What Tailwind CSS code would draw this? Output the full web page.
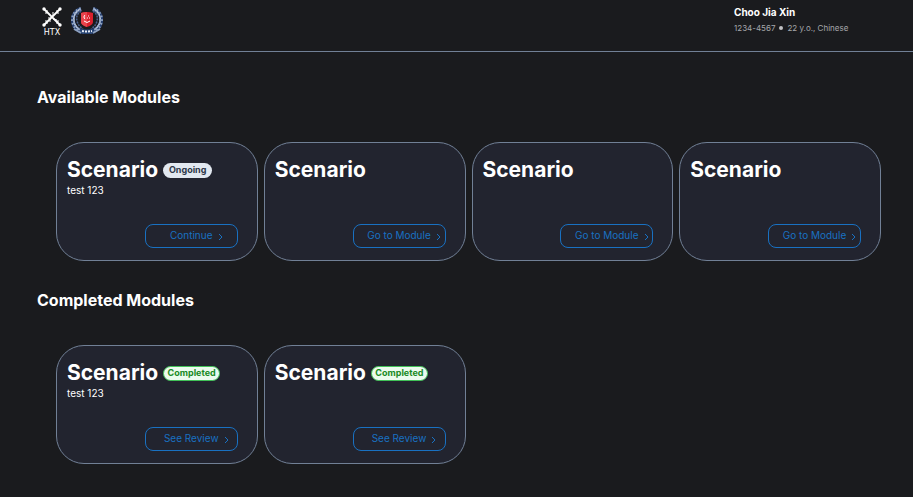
<!DOCTYPE html>
<html lang="en">
<head>
<meta charset="utf-8">
<meta name="viewport" content="width=device-width, initial-scale=1">
<title>Modules</title>
<script src="https://cdn.jsdelivr.net/npm/@tailwindcss/browser@4"></script>
</head>
<body class="min-h-screen bg-[#1a1b1e] font-['Inter',sans-serif] text-white">
<svg class="hidden" aria-hidden="true">
  <symbol id="chevron" viewBox="0 0 5 8"><path d="M1 1l3 3-3 3" fill="none" stroke="currentColor"/></symbol>
</svg>
<header class="flex h-[52px] items-start justify-between border-b border-[#718096] pr-16 pl-10">
  <div class="flex items-start gap-[7px] pt-[7px]">
    <div class="flex w-6 flex-col items-center">
      <svg class="h-5 w-5" viewBox="0 0 20 20" fill="none" stroke="#fff" aria-hidden="true">
        <path d="M2 2l16 16M18 2L2 18" stroke-width="1.800"/>
        <path d="M5 3v3H3M15 3v3h2M5 17v-3H3M15 17v-3h2M11 5v4M6 11h3M11 12l4 1M8 12v3" stroke-width="1"/>
        <g fill="#fff" stroke="none"><circle cx="2" cy="2" r="1.700"/><circle cx="18" cy="2" r="1.700"/><circle cx="2" cy="18" r="1.700"/><circle cx="18" cy="18" r="1.700"/></g>
      </svg>
      <span class="text-[8px] leading-[11px] font-['DejaVu_Sans',sans-serif]">HTX</span>
    </div>
    <svg class="h-7 w-8" viewBox="0 0 32 28" fill="none" role="img" aria-label="Crest">
      <path d="M10 2C4 4 1 9 2 15c1 5 5 9 11 10M22 2c6 2 9 7 8 13-1 5-5 9-11 10" stroke="#27406f" stroke-width="4"/>
      <path d="M9 2C4 5 2 9 3 15c1 4 4 7 8 9M23 2c5 3 7 7 6 13-1 4-4 7-8 9" stroke="#b9c6db" stroke-width="1.500"/>
      <path d="M10 2C4 4 1 9 2 15c1 5 5 9 11 10M22 2c6 2 9 7 8 13-1 5-5 9-11 10" stroke="#8fa2c2" stroke-width="3.500" stroke-dasharray="1.500 2"/>
      <path d="M10 4C6 7 5 10 6 14c1 4 3 6 6 8M22 4c4 3 5 6 4 10-1 4-3 6-6 8" stroke="#48618f" stroke-width="1.600" stroke-dasharray="2 1"/>
      <path d="M10 6q6-2 12 0v9q0 3-6 5-6-2-6-5z" fill="#d8202d"/>
      <path d="M10 6q3-1 6-1v15q-6-2-6-5z" fill="#e8434c"/>
      <path d="M14 8a2.500 2.500 0 0 0 0 4" stroke="#fff"/>
      <path d="M13 14q3 3 6 0M17 9h1M16 11h1M18 11h1" stroke="#fff"/>
      <path d="M9 21q7 3 14 0l1 5q-8 2-16 0z" fill="#254272"/>
      <path d="M11 24q5 1 10 0" stroke="#e8edf5" stroke-width="2" stroke-dasharray="2 1"/>
      <path d="M3 22l7 4M29 22l-7 4" stroke="#8c9fbd" stroke-width="2"/>
    </svg>
  </div>
  <div class="w-[115px] pt-[5px] whitespace-nowrap">
    <p class="text-[10px] leading-[14px] font-bold">Choo Jia Xin</p>
    <p class="flex items-center gap-1 pt-[3px] text-[8px] leading-[12px] text-[#a6a7ab]"><span>1234-4567</span><span class="size-1 rounded-full bg-[#c1c2c5]"></span><span>22 y.o., Chinese</span></p>
  </div>
</header>
<main class="pt-[33px] pr-8 pl-[37px]">
  <section>
    <h2 class="text-[16px] leading-6 font-bold">Available Modules</h2>
    <div class="grid grid-cols-4 gap-[6px] pt-[33px] pl-[19px]">
      <article class="flex h-[119px] flex-col rounded-[28px] border border-[#718096] bg-[#22242f] pt-[13px] pr-[19px] pb-3 pl-[10px]">
        <div class="flex items-center gap-[5px]"><h3 class="text-[21px] leading-[27px] font-bold">Scenario</h3><span class="mt-px flex h-[15px] w-[49px] items-center justify-center rounded-full bg-[#e2e8f0] text-[9px] font-bold text-[#2d3748]">Ongoing</span></div>
        <p class="text-[10px] leading-[14px]">test 123</p>
        <button class="mt-auto flex h-6 w-[93px] items-center justify-center gap-[5px] self-end rounded-lg border border-[#1971c2] pb-px pl-[10px] text-[10px] whitespace-nowrap text-[#1971c2]">Continue<svg class="mt-[2px] h-2 w-[5px]"><use href="#chevron"/></svg></button>
      </article>
      <article class="flex h-[119px] flex-col rounded-[28px] border border-[#718096] bg-[#22242f] pt-[13px] pr-[19px] pb-3 pl-[10px]">
        <h3 class="text-[21px] leading-[27px] font-bold">Scenario</h3>
        <button class="mt-auto flex h-6 w-[93px] items-center justify-center gap-[5px] self-end rounded-lg border border-[#1971c2] pb-px pl-[10px] text-[10px] whitespace-nowrap text-[#1971c2]">Go to Module<svg class="mt-[2px] h-2 w-[5px]"><use href="#chevron"/></svg></button>
      </article>
      <article class="flex h-[119px] flex-col rounded-[28px] border border-[#718096] bg-[#22242f] pt-[13px] pr-[19px] pb-3 pl-[10px]">
        <h3 class="text-[21px] leading-[27px] font-bold">Scenario</h3>
        <button class="mt-auto flex h-6 w-[93px] items-center justify-center gap-[5px] self-end rounded-lg border border-[#1971c2] pb-px pl-[10px] text-[10px] whitespace-nowrap text-[#1971c2]">Go to Module<svg class="mt-[2px] h-2 w-[5px]"><use href="#chevron"/></svg></button>
      </article>
      <article class="flex h-[119px] flex-col rounded-[28px] border border-[#718096] bg-[#22242f] pt-[13px] pr-[19px] pb-3 pl-[10px]">
        <h3 class="text-[21px] leading-[27px] font-bold">Scenario</h3>
        <button class="mt-auto flex h-6 w-[93px] items-center justify-center gap-[5px] self-end rounded-lg border border-[#1971c2] pb-px pl-[10px] text-[10px] whitespace-nowrap text-[#1971c2]">Go to Module<svg class="mt-[2px] h-2 w-[5px]"><use href="#chevron"/></svg></button>
      </article>
    </div>
  </section>
  <section class="pt-[27px]">
    <h2 class="text-[16px] leading-6 font-bold">Completed Modules</h2>
    <div class="grid grid-cols-4 gap-[6px] pt-[33px] pl-[19px]">
      <article class="flex h-[119px] flex-col rounded-[28px] border border-[#718096] bg-[#22242f] pt-[13px] pr-[19px] pb-3 pl-[10px]">
        <div class="flex items-center gap-[5px]"><h3 class="text-[21px] leading-[27px] font-bold">Scenario</h3><span class="mt-px flex h-[15px] w-[57px] items-center justify-center rounded-full border border-[#40c057] bg-[#ebfbee] text-[9px] font-bold text-[#178a24]">Completed</span></div>
        <p class="text-[10px] leading-[14px]">test 123</p>
        <button class="mt-auto flex h-6 w-[93px] items-center justify-center gap-[5px] self-end rounded-lg border border-[#1971c2] pb-px pl-[10px] text-[10px] whitespace-nowrap text-[#1971c2]">See Review<svg class="mt-[2px] h-2 w-[5px]"><use href="#chevron"/></svg></button>
      </article>
      <article class="flex h-[119px] flex-col rounded-[28px] border border-[#718096] bg-[#22242f] pt-[13px] pr-[19px] pb-3 pl-[10px]">
        <div class="flex items-center gap-[5px]"><h3 class="text-[21px] leading-[27px] font-bold">Scenario</h3><span class="mt-px flex h-[15px] w-[57px] items-center justify-center rounded-full border border-[#40c057] bg-[#ebfbee] text-[9px] font-bold text-[#178a24]">Completed</span></div>
        <button class="mt-auto flex h-6 w-[93px] items-center justify-center gap-[5px] self-end rounded-lg border border-[#1971c2] pb-px pl-[10px] text-[10px] whitespace-nowrap text-[#1971c2]">See Review<svg class="mt-[2px] h-2 w-[5px]"><use href="#chevron"/></svg></button>
      </article>
    </div>
  </section>
</main>
</body>
</html>
